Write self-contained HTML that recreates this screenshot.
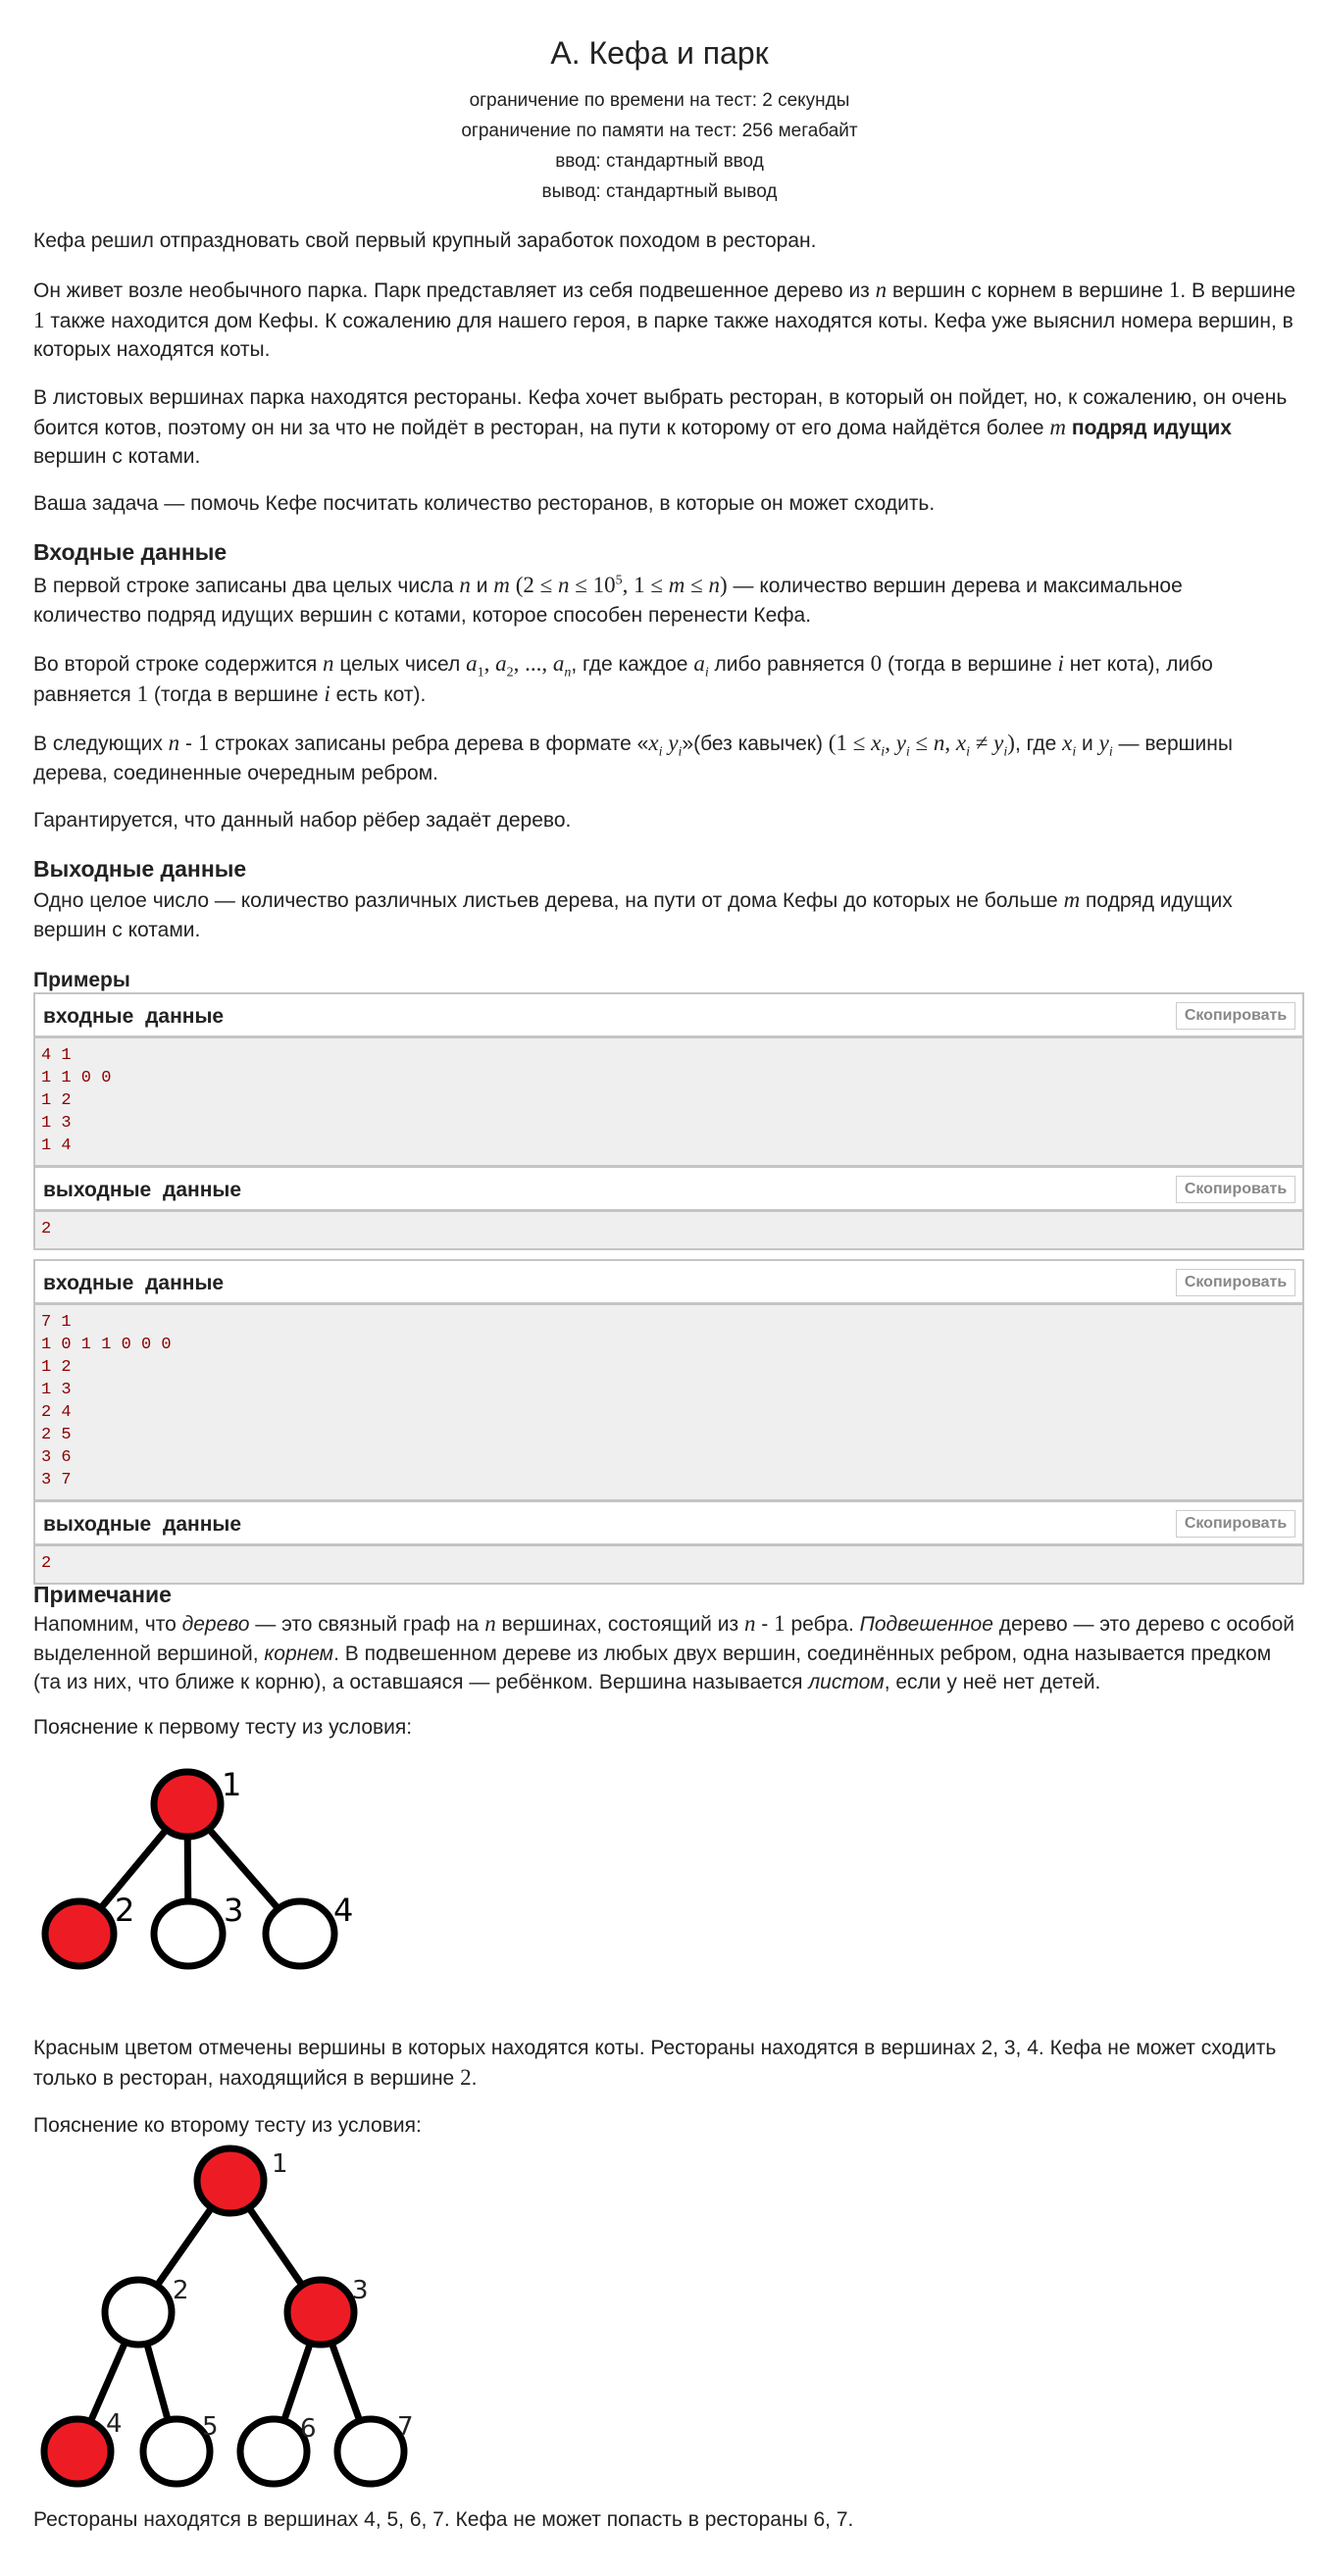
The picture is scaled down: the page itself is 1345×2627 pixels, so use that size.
<!DOCTYPE html>
<html><head><meta charset="utf-8">
<style>
*{margin:0;padding:0;box-sizing:border-box}
body{width:1345px;height:2627px;background:#fff;position:relative;font-family:"Liberation Sans",Arial,sans-serif;color:#222;font-size:21px;overflow:hidden}
.a{position:absolute;left:34px;width:1292px;line-height:29.5px}
.c{position:absolute;left:0;width:1345px;text-align:center}
.h{font-weight:bold;font-size:23px}
i.m,.m{font-family:"Liberation Serif",serif;font-size:23px}
sub,sup{font-size:14px;line-height:0}
.box{position:absolute;left:34px;width:1296px;border:2px solid #c4c4c4;background:#fff}
.hd{height:45px;border-bottom:3px solid #c4c4c4;position:relative;font-weight:bold;font-size:21px;line-height:45px;padding-left:8px;word-spacing:6px}
.cp{position:absolute;right:7px;top:8px;width:122px;height:28px;border:1px solid #ccc;font-size:16px;line-height:26px;text-align:center;color:#888;font-weight:bold;word-spacing:0}
.pre{background:#efefef;font-family:"Liberation Mono",monospace;font-size:17px;color:#8b0000;line-height:23px;padding:6px 6px 8px;white-space:pre;border-bottom:3px solid #c4c4c4}
.last{border-bottom:none}
</style></head><body>
<div class="c" style="top:34px;font-size:32px;line-height:40px">A. Кефа и парк</div>
<div class="c" style="top:87px;line-height:31px;font-size:19px">ограничение по времени на тест: 2 секунды<br>ограничение по памяти на тест: 256 мегабайт<br>ввод: стандартный ввод<br>вывод: стандартный вывод</div>

<div class="a" style="top:231px">Кефа решил отпраздновать свой первый крупный заработок походом в ресторан.</div>
<div class="a" style="top:281px">Он живет возле необычного парка. Парк представляет из себя подвешенное дерево из <i class="m">n</i> вершин с корнем в вершине <span class="m">1</span>. В вершине <span class="m">1</span> также находится дом Кефы. К сожалению для нашего героя, в парке также находятся коты. Кефа уже выяснил номера вершин, в которых находятся коты.</div>
<div class="a" style="top:391px">В листовых вершинах парка находятся рестораны. Кефа хочет выбрать ресторан, в который он пойдет, но, к сожалению, он очень боится котов, поэтому он ни за что не пойдёт в ресторан, на пути к которому от его дома найдётся более <i class="m">m</i> <b>подряд идущих</b> вершин с котами.</div>
<div class="a" style="top:499px">Ваша задача — помочь Кефе посчитать количество ресторанов, в которые он может сходить.</div>

<div class="a h" style="top:549px">Входные данные</div>
<div class="a" style="top:582px">В первой строке записаны два целых числа <i class="m">n</i> и <i class="m">m</i> <span class="m">(2 ≤ <i>n</i> ≤ 10<sup>5</sup>, 1 ≤ <i>m</i> ≤ <i>n</i>)</span> — количество вершин дерева и максимальное<br>количество подряд идущих вершин с котами, которое способен перенести Кефа.</div>
<div class="a" style="top:662px">Во второй строке содержится <i class="m">n</i> целых чисел <span class="m"><i>a</i><sub>1</sub>, <i>a</i><sub>2</sub>, ..., <i>a<sub>n</sub></i></span>, где каждое <i class="m">a<sub>i</sub></i> либо равняется <span class="m">0</span> (тогда в вершине <i class="m">i</i> нет кота), либо равняется <span class="m">1</span> (тогда в вершине <i class="m">i</i> есть кот).</div>
<div class="a" style="top:743px">В следующих <i class="m">n</i> - <span class="m">1</span> строках записаны ребра дерева в формате «<i class="m">x<sub>i</sub></i> <i class="m">y<sub>i</sub></i>»(без кавычек) <span class="m">(1 ≤ <i>x<sub>i</sub></i>, <i>y<sub>i</sub></i> ≤ <i>n</i>, <i>x<sub>i</sub></i> ≠ <i>y<sub>i</sub></i>)</span>, где <i class="m">x<sub>i</sub></i> и <i class="m">y<sub>i</sub></i> — вершины дерева, соединенные очередным ребром.</div>
<div class="a" style="top:822px">Гарантируется, что данный набор рёбер задаёт дерево.</div>
<div class="a h" style="top:872px">Выходные данные</div>
<div class="a" style="top:903px">Одно целое число — количество различных листьев дерева, на пути от дома Кефы до которых не больше <i class="m">m</i> подряд идущих вершин с котами.</div>

<div class="a" style="top:985px;font-size:21px;font-weight:bold">Примеры</div>
<div class="box" style="top:1012px">
<div class="hd">входные данные<div class="cp">Скопировать</div></div>
<div class="pre">4 1
1 1 0 0
1 2
1 3
1 4</div>
<div class="hd">выходные данные<div class="cp">Скопировать</div></div>
<div class="pre last">2</div>
</div>
<div class="box" style="top:1284px">
<div class="hd">входные данные<div class="cp">Скопировать</div></div>
<div class="pre">7 1
1 0 1 1 0 0 0
1 2
1 3
2 4
2 5
3 6
3 7</div>
<div class="hd">выходные данные<div class="cp">Скопировать</div></div>
<div class="pre last">2</div>
</div>

<div class="a h" style="top:1612px">Примечание</div>
<div class="a" style="top:1641px">Напомним, что <i>дерево</i> — это связный граф на <i class="m">n</i> вершинах, состоящий из <i class="m">n</i> - <span class="m">1</span> ребра. <i>Подвешенное</i> дерево — это дерево с особой выделенной вершиной, <i>корнем</i>. В подвешенном дереве из любых двух вершин, соединённых ребром, одна называется предком<br>(та из них, что ближе к корню), а оставшаяся — ребёнком. Вершина называется <i>листом</i>, если у неё нет детей.</div>
<div class="a" style="top:1747px">Пояснение к первому тесту из условия:</div>

<svg style="position:absolute;left:0;top:1775px" width="400" height="240">
<g stroke="#000" stroke-width="7">
<line x1="191" y1="65" x2="81" y2="197"/><line x1="191" y1="65" x2="192" y2="197"/><line x1="191" y1="65" x2="306" y2="197"/>
<ellipse cx="191" cy="65" rx="34" ry="33" fill="#ed1c24"/>
<ellipse cx="81" cy="197" rx="35" ry="33" fill="#ed1c24"/>
<ellipse cx="192" cy="197" rx="35" ry="33" fill="#fff"/>
<ellipse cx="306" cy="197" rx="35" ry="33" fill="#fff"/>
</g>
<g font-family="DejaVu Sans,sans-serif" font-size="32" fill="#000">
<text x="226" y="56">1</text><text x="117" y="184">2</text><text x="228" y="184">3</text><text x="340" y="184">4</text></g>
</svg>

<div class="a" style="top:2074px">Красным цветом отмечены вершины в которых находятся коты. Рестораны находятся в вершинах 2, 3, 4. Кефа не может сходить только в ресторан, находящийся в вершине <span class="m">2</span>.</div>
<div class="a" style="top:2153px">Пояснение ко второму тесту из условия:</div>

<svg style="position:absolute;left:0;top:2180px" width="460" height="380">
<g stroke="#000" stroke-width="7">
<line x1="235" y1="44" x2="141" y2="178"/><line x1="235" y1="44" x2="327" y2="178"/>
<line x1="141" y1="178" x2="79" y2="320"/><line x1="141" y1="178" x2="180" y2="320"/>
<line x1="327" y1="178" x2="279" y2="320"/><line x1="327" y1="178" x2="378" y2="320"/>
<ellipse cx="235" cy="44" rx="34" ry="33" fill="#ed1c24"/>
<ellipse cx="141" cy="178" rx="34" ry="33" fill="#fff"/>
<ellipse cx="327" cy="178" rx="34" ry="33" fill="#ed1c24"/>
<ellipse cx="79" cy="320" rx="34" ry="33" fill="#ed1c24"/>
<ellipse cx="180" cy="320" rx="34" ry="33" fill="#fff"/>
<ellipse cx="279" cy="320" rx="34" ry="33" fill="#fff"/>
<ellipse cx="378" cy="320" rx="34" ry="33" fill="#fff"/>
</g>
<g font-family="DejaVu Sans,sans-serif" font-size="26" fill="#222">
<text x="277" y="35">1</text><text x="176" y="164">2</text><text x="359" y="164">3</text>
<text x="108" y="300">4</text><text x="206" y="303">5</text><text x="306" y="305">6</text><text x="405" y="303">7</text></g>
</svg>

<div class="a" style="top:2555px">Рестораны находятся в вершинах 4, 5, 6, 7. Кефа не может попасть в рестораны 6, 7.</div>
</body></html>
